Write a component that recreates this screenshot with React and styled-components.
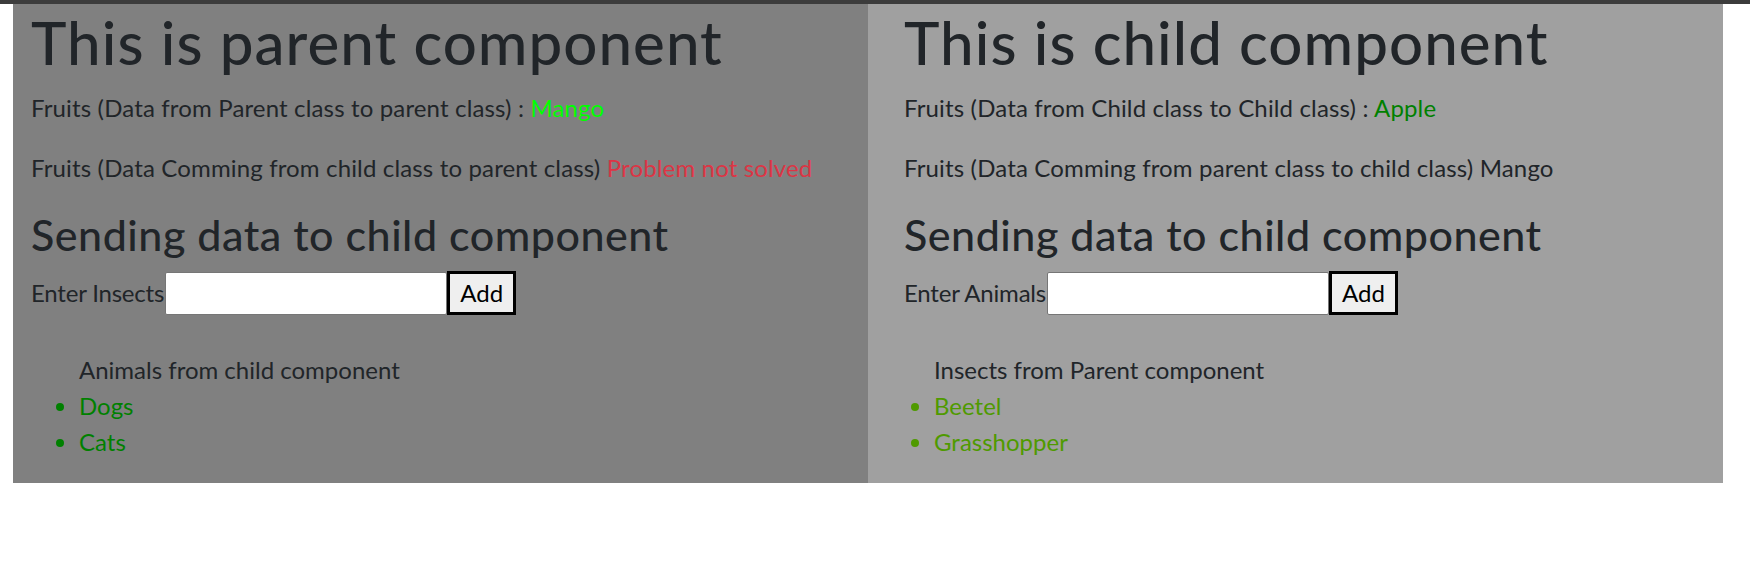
import React from "react";
import styled, { createGlobalStyle } from "styled-components";

const GlobalStyle = createGlobalStyle`
  html, body {
    margin: 0;
    padding: 0;
    background: #ffffff;
  }
  body {
    font-family: Lato, "Open Sans", sans-serif;
    font-size: 24px;
    line-height: 36px;
    color: #212529;
  }
  * { box-sizing: border-box; }
`;

const TopBar = styled.div`
  height: 4px;
  background: #3c3c3c;
`;

const Columns = styled.div`
  display: grid;
  grid-template-columns: 855px 855px;
  margin-left: 13px;
`;

const Panel = styled.section`
  background: ${(p) => p.$bg};
  padding: 2px 18px 23px ${(p) => p.$padLeft}px;
  display: flow-root;
`;

const Title = styled.h1`
  margin: 0 0 12px;
  font-size: 60px;
  line-height: 72px;
  font-weight: 500;
  letter-spacing: 1.05px;
  color: #212529;
`;

const Para = styled.p`
  margin: 0 0 24px;
  letter-spacing: 0.15px;
`;

const Value = styled.span`
  color: ${(p) => p.$color};
`;

const SubTitle = styled.h3`
  margin: 0 0 12px;
  font-size: 43px;
  line-height: 50px;
  font-weight: 500;
  letter-spacing: 0.52px;
  color: #212529;
`;

const InputRow = styled.div`
  display: flex;
  align-items: center;
  height: 44px;
  margin-top: -1px;
`;

const Label = styled.label`
  color: #212529;
  letter-spacing: -0.2px;
`;

const TextInput = styled.input`
  width: 282px;
  height: 43px;
  margin-left: 1px;
  border: 1px solid #767676;
  border-radius: 2px;
  background: #ffffff;
  font: inherit;
  padding: 1px 3px;
`;

const AddButton = styled.button`
  width: 69px;
  height: 44px;
  padding: 0;
  border: 3px solid #000000;
  border-radius: 0;
  background: #efefef;
  color: #000000;
  font: inherit;
  line-height: 36px;
`;

const List = styled.ul`
  margin: 37px 0 0;
  padding-left: ${(p) => p.$indent}px;
  list-style: disc;
`;

const ListHeading = styled.li`
  list-style: none;
  color: #212529;
`;

const Item = styled.li`
  color: ${(p) => p.$color};
`;

function Section({ bg, padLeft, title, rows, inputLabel, listIndent, listTitle, items, itemColor }) {
  return (
    <Panel $bg={bg} $padLeft={padLeft}>
      <Title>{title}</Title>
      {rows.map((r, i) => (
        <Para key={i}>
          {r.text}
          <Value $color={r.color}>{r.value}</Value>
        </Para>
      ))}
      <SubTitle>Sending data to child component</SubTitle>
      <InputRow>
        <Label>{inputLabel}</Label>
        <TextInput type="text" />
        <AddButton>Add</AddButton>
      </InputRow>
      <List $indent={listIndent}>
        <ListHeading>{listTitle}</ListHeading>
        {items.map((it) => (
          <Item key={it} $color={itemColor}>{it}</Item>
        ))}
      </List>
    </Panel>
  );
}

export default function App() {
  return (
    <>
      <GlobalStyle />
      <TopBar />
      <Columns>
        <Section
          bg="#808080"
          padLeft={18}
          title="This is parent component"
          rows={[
            { text: "Fruits (Data from Parent class to parent class) : ", value: "Mango", color: "#00ff00" },
            { text: "Fruits (Data Comming from child class to parent class) ", value: "Problem not solved", color: "#dc3545" },
          ]}
          inputLabel="Enter Insects"
          listIndent={48}
          listTitle="Animals from child component"
          items={["Dogs", "Cats"]}
          itemColor="#008000"
        />
        <Section
          bg="#a0a0a0"
          padLeft={36}
          title="This is child component"
          rows={[
            { text: "Fruits (Data from Child class to Child class) : ", value: "Apple", color: "#008000" },
            { text: "Fruits (Data Comming from parent class to child class) ", value: "Mango", color: "#212529" },
          ]}
          inputLabel="Enter Animals"
          listIndent={30}
          listTitle="Insects from Parent component"
          items={["Beetel", "Grasshopper"]}
          itemColor="#4f9a00"
        />
      </Columns>
    </>
  );
}
